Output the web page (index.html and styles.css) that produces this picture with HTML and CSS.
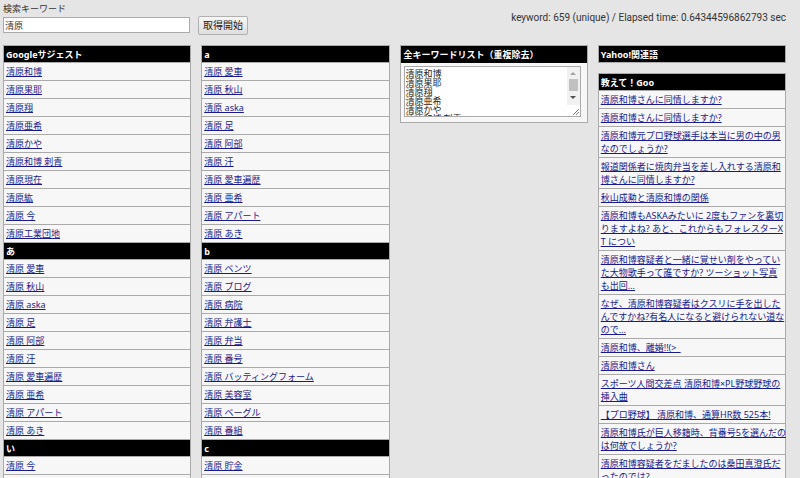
FILE: index.html
```html
<!DOCTYPE html>
<html lang="ja">
<head>
<meta charset="utf-8">
<title>検索キーワード</title>
<link rel="stylesheet" href="styles.css">
</head>
<body>
<header class="top">
  <form class="search">
    <div class="field">
      <label for="kw">検索キーワード</label>
      <input id="kw" type="text" value="清原">
    </div>
    <button type="button">取得開始</button>
  </form>
  <p class="stats">keyword: 659 (unique) / Elapsed time: 0.64344596862793 sec</p>
</header>
<main class="columns">
  <table class="list">
    <tr><th>Googleサジェスト</th></tr>
    <tr><td><a href="#">清原和博</a></td></tr>
    <tr><td><a href="#">清原果耶</a></td></tr>
    <tr><td><a href="#">清原翔</a></td></tr>
    <tr><td><a href="#">清原亜希</a></td></tr>
    <tr><td><a href="#">清原かや</a></td></tr>
    <tr><td><a href="#">清原和博 刺青</a></td></tr>
    <tr><td><a href="#">清原現在</a></td></tr>
    <tr><td><a href="#">清原紘</a></td></tr>
    <tr><td><a href="#">清原 今</a></td></tr>
    <tr><td><a href="#">清原工業団地</a></td></tr>
    <tr><th>あ</th></tr>
    <tr><td><a href="#">清原 愛車</a></td></tr>
    <tr><td><a href="#">清原 秋山</a></td></tr>
    <tr><td><a href="#">清原 aska</a></td></tr>
    <tr><td><a href="#">清原 足</a></td></tr>
    <tr><td><a href="#">清原 阿部</a></td></tr>
    <tr><td><a href="#">清原 汗</a></td></tr>
    <tr><td><a href="#">清原 愛車遍歴</a></td></tr>
    <tr><td><a href="#">清原 亜希</a></td></tr>
    <tr><td><a href="#">清原 アパート</a></td></tr>
    <tr><td><a href="#">清原 あき</a></td></tr>
    <tr><th>い</th></tr>
    <tr><td><a href="#">清原 今</a></td></tr>
    <tr><td></td></tr>
  </table>
  <table class="list">
    <tr><th>a</th></tr>
    <tr><td><a href="#">清原 愛車</a></td></tr>
    <tr><td><a href="#">清原 秋山</a></td></tr>
    <tr><td><a href="#">清原 aska</a></td></tr>
    <tr><td><a href="#">清原 足</a></td></tr>
    <tr><td><a href="#">清原 阿部</a></td></tr>
    <tr><td><a href="#">清原 汗</a></td></tr>
    <tr><td><a href="#">清原 愛車遍歴</a></td></tr>
    <tr><td><a href="#">清原 亜希</a></td></tr>
    <tr><td><a href="#">清原 アパート</a></td></tr>
    <tr><td><a href="#">清原 あき</a></td></tr>
    <tr><th>b</th></tr>
    <tr><td><a href="#">清原 ベンツ</a></td></tr>
    <tr><td><a href="#">清原 ブログ</a></td></tr>
    <tr><td><a href="#">清原 病院</a></td></tr>
    <tr><td><a href="#">清原 弁護士</a></td></tr>
    <tr><td><a href="#">清原 弁当</a></td></tr>
    <tr><td><a href="#">清原 番号</a></td></tr>
    <tr><td><a href="#">清原 バッティングフォーム</a></td></tr>
    <tr><td><a href="#">清原 美容室</a></td></tr>
    <tr><td><a href="#">清原 ベーグル</a></td></tr>
    <tr><td><a href="#">清原 番組</a></td></tr>
    <tr><th>c</th></tr>
    <tr><td><a href="#">清原 貯金</a></td></tr>
    <tr><td></td></tr>
  </table>
  <section class="panel">
    <h2><label for="all">全キーワードリスト（重複除去）</label></h2>
    <div class="box">
      <div class="area">
        <textarea id="all" wrap="off">清原和博
清原果耶
清原翔
清原亜希
清原かや
清原和博 刺青
清原現在</textarea>
        <svg class="scroll" viewBox="0 0 13 49" aria-hidden="true">
          <path fill="#f1f1f1" d="M0 0h13v38H0z"/>
          <path fill="#a3a3a3" d="M3 8l3-3 3 3z"/>
          <path fill="#c1c1c1" d="M2 12h9v12H2z"/>
          <path fill="#505050" d="M3 29h6l-3 3z"/>
          <path fill="#fff" d="M0 38h13v11H0z"/>
          <path stroke="#888" d="M6 48l6-6M9 48l3-3"/>
        </svg>
      </div>
    </div>
  </section>
  <div class="stack">
    <table class="list">
      <tr><th>Yahoo!関連語</th></tr>
    </table>
    <table class="list">
      <tr><th>教えて！Goo</th></tr>
      <tr><td><a href="#">清原和博さんに同情しますか?</a></td></tr>
      <tr><td><a href="#">清原和博さんに同情しますか?</a></td></tr>
      <tr><td><a href="#">清原和博元プロ野球選手は本当に男の中の男<br>なのでしょうか?</a></td></tr>
      <tr><td><a href="#">報道関係者に焼肉弁当を差し入れする清原和<br>博さんに同情しますか?</a></td></tr>
      <tr><td><a href="#">秋山成勲と清原和博の関係</a></td></tr>
      <tr><td><a href="#">清原和博もASKAみたいに 2度もファンを裏切<br>りますよね? あと、これからもフォレスターX<br>T につい</a></td></tr>
      <tr><td><a href="#">清原和博容疑者と一緒に覚せい剤をやってい<br>た大物歌手って誰ですか? ツーショット写真<br>も出回...</a></td></tr>
      <tr><td><a href="#">なぜ、清原和博容疑者はクスリに手を出した<br>んですかね?有名人になると避けられない道な<br>ので...</a></td></tr>
      <tr><td><a href="#">清原和博、離婚!!(&gt;_</a></td></tr>
      <tr><td><a href="#">清原和博さん</a></td></tr>
      <tr><td><a href="#">スポーツ人間交差点 清原和博×PL野球野球の<br>挿入曲</a></td></tr>
      <tr><td><a href="#">【プロ野球】 清原和博、通算HR数 525本!</a></td></tr>
      <tr><td><a href="#">清原和博氏が巨人移籍時、背番号5を選んだの<br>は何故でしょうか?</a></td></tr>
      <tr><td><a href="#">清原和博容疑者をだましたのは桑田真澄氏だ<br>ったのでは?</a></td></tr>
    </table>
  </div>
</main>
</body>
</html>
```
FILE: styles.css
```css
* { box-sizing: border-box; }

html { overflow: hidden; background: #e5e5e5; }

body {
  margin: 0;
  padding: 2px 14px 0 3px;
  color: #333;
  font: 9px/13px "Noto Sans", "Noto Sans CJK JP", sans-serif;
}

.top {
  display: flex;
  justify-content: space-between;
  height: 43px;
}

.search { display: flex; align-items: flex-start; gap: 8px; }

.field { display: flex; flex-direction: column; gap: 2px; }

.field input {
  width: 187px;
  height: 16px;
  padding: 0 1px;
  border: 1px solid #aaa;
  background: #fff;
  color: #333;
  font: inherit;
}

.search button {
  height: 19px;
  margin-top: 14px;
  padding: 0 4px;
  border: 1px solid #b0b0b0;
  border-radius: 2px;
  background: linear-gradient(#f6f6f6, #dedede);
  color: #222;
  font: inherit;
  font-size: 10px;
}

.stats { margin: 9px 0 0; font-family: Roboto, sans-serif; font-size: 10px; }

.columns {
  display: grid;
  grid-template-columns: repeat(4, minmax(0, 1fr));
  gap: 10px;
  align-items: start;
}

.stack { display: grid; gap: 10px; }

.list {
  width: 100%;
  table-layout: fixed;
  border-collapse: collapse;
}

.list th,
.list td {
  height: 18px;
  padding: 2px;
  border: 1px solid #aaa;
  background: #f7f7f7;
  text-align: left;
  white-space: nowrap;
}

.list th,
.panel h2 {
  height: 17px;
  padding: 2px 2px 1px;
  background: #000;
  color: #fff;
  font-weight: bold;
}

.list a { color: #1a1a8c; text-decoration: underline; }

.panel { border: 1px solid #aaa; background: #f7f7f7; }

.panel h2 { margin: 0; padding-left: 3px; font-size: 9px; }

.box { padding: 3px 6px 5px 3px; }

.area { position: relative; }

.area textarea {
  display: block;
  width: 100%;
  height: 51px;
  padding: 2px 1px 0;
  border: 1px solid #aaa;
  background: #fff;
  color: #222;
  font: 9px/9px "Noto Sans CJK JP", sans-serif;
  overflow: hidden;
  resize: none;
}

.scroll {
  position: absolute;
  top: 1px;
  right: 1px;
  width: 13px;
  height: 49px;
}
```
